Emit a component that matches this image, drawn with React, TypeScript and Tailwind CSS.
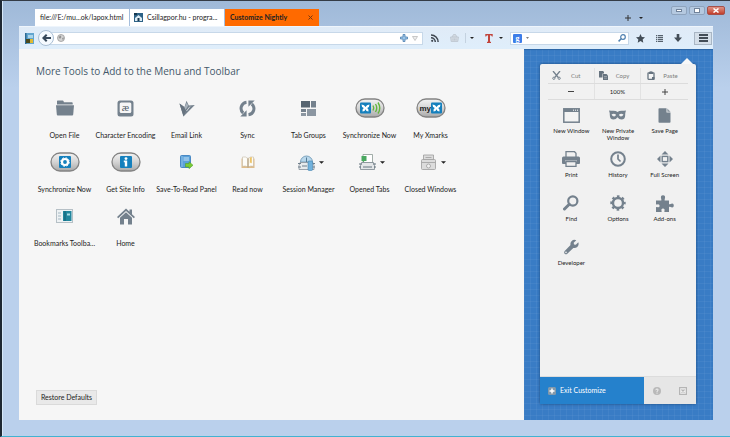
/**
 * Browser window with the customize mode opened:
 * tab strip, navigation toolbar, tool palette and the menu panel.
 */

import type { ReactNode } from 'react';

type IconProps = {
    /** Tailwind classes for the size and colour */
    className?: string;
};

const Caret = ({ className }: IconProps) => (
    <svg viewBox="0 0 6 3" className={className} fill="currentColor">
        <path d="M0 0h6L3 3z" />
    </svg>
);

const FolderIcon = () => (
    <svg viewBox="0 0 18 16" className="w-[18px] h-4" fill="#74818d">
        <path d="M1 1.2q0-.7.7-.7h5q.6 0 .8.6l.4 1.2h8q.8 0 .8.8v1.4H1z" />
        <path d="M0 5.3h18l-.8 9.3q-.1.9-1 .9H1.800q-.9 0-1-.9z" />
    </svg>
);

const EncodingIcon = () => (
    <svg viewBox="0 0 17 17" className="w-[17px] h-[17px]">
        <rect x=".5" y=".5" width="16" height="16" rx="2.500" fill="#74818d" />
        <rect x="2.700" y="2.500" width="11.600" height="10.500" rx="1.500" fill="#f6f6f6" />
        <text x="8.500" y="10.600" textAnchor="middle" fontSize="11" fontFamily="Liberation Serif, serif" fill="#4f5b66">
            æ
        </text>
    </svg>
);

const EmailIcon = () => (
    <svg viewBox="0 0 16 17" className="w-4 h-[17px]">
        <path d="M.5 3.500L5.500 7 7.500.8l2.300 4.700L15.800 5 4.500 16.500z" fill="#74818d" />
        <path d="M.5 3.500L4.500 16.500 7.500 9z" fill="#66737f" />
        <path d="M5.500 7.500L7.800 2.500l1.400 3.300L6.500 10z" fill="#a9b3bc" />
        <path d="M7.500 11l3.500-4.500" stroke="#e4e8eb" strokeWidth=".8" />
    </svg>
);

const SyncIcon = () => (
    <svg viewBox="0 0 17 17" className="w-[17px] h-[17px]">
        <path d="M7.500 2.200A6.200 6.200 0 0 0 4.200 13M9.500 14.800A6.200 6.200 0 0 0 12.800 4" fill="none" stroke="#74818d" strokeWidth="3" />
        <path d="M7.600 10.200v6.300H1.300zM9.400 6.800V.5h6.300z" fill="#74818d" />
    </svg>
);

const TabGroupsIcon = () => (
    <svg viewBox="0 0 15 15" className="w-[15px] h-[15px]">
        <rect width="9" height="6.500" fill="#566470" />
        <rect x="10" width="5" height="6.500" fill="#74818d" />
        <rect y="8" width="5" height="3" fill="#74818d" />
        <rect y="12" width="5" height="3" fill="#8b96a1" />
        <rect x="6" y="8" width="9" height="7" fill="#8b96a1" />
    </svg>
);

/** Rounded metal capsule that holds the Xmarks symbols */
const Capsule = ({ children }: { children: ReactNode }) => (
    <svg viewBox="0 0 30 20" className="w-[30px] h-5">
        <defs>
            <linearGradient id="metal" x1="0" y1="0" x2="0" y2="1">
                <stop offset="0" stopColor="#f4f4f4" />
                <stop offset=".5" stopColor="#d4d4d4" />
                <stop offset="1" stopColor="#a9a9a9" />
            </linearGradient>
        </defs>
        <rect x="1" y="1" width="28" height="18" rx="9" fill="url(#metal)" stroke="#838383" strokeWidth="1.300" />
        {children}
    </svg>
);

const Wings = ({ x }: { x: number }) => (
    <g transform={`translate(${x} 4.500)`}>
        <rect width="11" height="11" rx="1" fill="#1580bd" />
        <path d="M1.500 2q3 0 4 2.500Q6.500 2 9.500 2 9.500 5 7.200 5.500 9 6.500 8.500 9 6 9 5.500 6.800 5 9 2.500 9 2 6.500 3.800 5.500 1.500 5 1.500 2z" fill="#fff" />
    </g>
);

const XmarksSyncIcon = () => (
    <Capsule>
        <Wings x={5} />
        <path d="M18 7.500q1.500 2.500 0 5M20.500 6q2.500 4 0 8M23 4.500q3.500 5.500 0 11" fill="none" stroke="#63b63c" strokeWidth="1.400" />
    </Capsule>
);

const MyXmarksIcon = () => (
    <Capsule>
        <text x="3.500" y="13" fontSize="8" fontWeight="bold" fontFamily="Liberation Sans, sans-serif" fill="#222">
            my
        </text>
        <Wings x={15} />
    </Capsule>
);

const XmarksGearIcon = () => (
    <Capsule>
        <rect x="9" y="4" width="12" height="12" rx="1" fill="#1580bd" />
        <circle cx="15" cy="10" r="3" fill="none" stroke="#fff" strokeWidth="2.200" />
        <circle cx="15" cy="10" r="4.300" fill="none" stroke="#fff" strokeWidth="1" strokeDasharray="1.700 1.700" />
    </Capsule>
);

const XmarksInfoIcon = () => (
    <Capsule>
        <rect x="9" y="4" width="12" height="12" rx="1" fill="#1580bd" />
        <circle cx="15" cy="6.600" r="1.400" fill="#fff" />
        <path d="M12.800 8.600h3.400V14.500h-2.400V10.300h-1z" fill="#fff" />
    </Capsule>
);

const SavePanelIcon = () => (
    <svg viewBox="0 0 13 14" className="w-[13px] h-3.5">
        <rect x=".5" y=".5" width="10" height="12" rx="1" fill="#5ba1da" stroke="#4a89c4" />
        <path d="M3.500 3h5.500M3.500 5h5.500" stroke="#c9e4f7" />
        <path d="M2 1v11" stroke="#8cc0e8" />
        <path d="M5.500 8.500H9V6.700l4 3.500-4 3.500V12H5.500z" fill="#7acb35" stroke="#4a9b1e" strokeWidth=".5" />
    </svg>
);

const BookIcon = () => (
    <svg viewBox="0 0 14 13" className="w-3.5 h-[13px]">
        <path d="M.5 2.500h13v9.500h-13z" fill="#e0bd8a" />
        <path d="M1.500 1q3-.8 5.500 1.500v8.500Q4.500 9.500 1.500 10.300zM12.500 1q-3-.8-5.500 1.500v8.500q2.500-1.500 5.500-.7z" fill="#fdfcf8" stroke="#c5b9a4" strokeWidth=".6" />
        <path d="M8.800 1.500v6l1-1 1 1v-6.500z" fill="#ecc368" />
        <path d="M7 2.500v9" stroke="#a58c62" strokeWidth=".8" />
    </svg>
);

const SessionIcon = () => (
    <svg viewBox="0 0 17 17" className="w-[17px] h-[17px]">
        <path d="M2.500 8a6 6 0 0 1 12 0z" fill="#b9d8ec" stroke="#7aa2bd" />
        <path d="M8.500 8L8.500 3.500" stroke="#557b95" />
        <path d="M2 8.500h13l1 3v4H1v-4z" fill="#e8ebed" stroke="#87919a" strokeWidth=".8" />
        <path d="M0 9.500h3M0 13h3M4 12h5M14.500 9.500H17M14.500 13H17" stroke="#6f7f8b" />
        <rect x="10" y="7" width="4.500" height="9.500" rx="1" fill="#71b2dd" stroke="#4684b0" strokeWidth=".6" />
    </svg>
);

const OpenedTabsIcon = () => (
    <svg viewBox="0 0 17 17" className="w-[17px] h-[17px]">
        <path d="M4 .5h9.500V9H4z" fill="#fff" stroke="#8b9a94" strokeWidth=".8" />
        <path d="M2.500 2h5v5H5.500L4 8.500V7H2.500z" fill="#4aa860" />
        <path d="M2.500 8.500h12l1 3v4h-14v-4z" fill="#e3e6e8" stroke="#7b868e" strokeWidth=".8" />
        <path d="M0 10h3M14 10h3M0 13h2M15 13h2M4 13h9" stroke="#64747f" />
    </svg>
);

const ClosedWindowsIcon = () => (
    <svg viewBox="0 0 17 17" className="w-[17px] h-[17px]" fill="#dcdcdc" stroke="#a5a5a5" strokeWidth=".9">
        <path d="M3.500 1h10v5h-10z" />
        <rect x="1.500" y="5.500" width="14" height="10" rx="1" />
        <path d="M1.500 8.500h14M5.500 3.500h6" />
        <circle cx="8.500" cy="12" r="2" fill="#f2f2f2" />
    </svg>
);

const BookmarksToolbarIcon = () => (
    <svg viewBox="0 0 17 14" className="w-[17px] h-3.5">
        <rect x=".5" y=".5" width="16" height="13" fill="#eef2f4" stroke="#b6c0c6" />
        <path d="M2 4h3M2 7h3M2 10h3" stroke="#a5b8c3" />
        <rect x="7" y="2" width="8.500" height="10" fill="#21869d" />
        <path d="M9 2v10" stroke="#105f74" />
        <path d="M11 4.500h3v2h-3z" fill="#a8dbe4" />
    </svg>
);

const HomeIcon = () => (
    <svg viewBox="0 0 18 17" className="w-[18px] h-[17px]" fill="#74818d">
        <path d="M9 .5L0 9l1.200 1.200L9 3l7.800 7.200L18 9l-3-2.800V1.500h-2.500v2.300z" />
        <path d="M9 4.200l6 5.600V16.500h-4V11H7v5.500H3V9.800z" />
    </svg>
);

const CutIcon = () => (
    <svg viewBox="0 0 9 9" className="w-[9px] h-[9px]" fill="none" stroke="#74818d">
        <path d="M1 0l5.300 6.500M8 0L2.700 6.500" strokeWidth="1.300" />
        <circle cx="1.800" cy="7.300" r="1.100" />
        <circle cx="7.200" cy="7.300" r="1.100" />
    </svg>
);

const CopyIcon = () => (
    <svg viewBox="0 0 9 9" className="w-[9px] h-[9px]" fill="#66737f">
        <path d="M0 0h4l1 1v1.500H3.500V6.500H0z" />
        <path d="M4 3h3.500L9 4.500V9H4z" />
        <path d="M5 5.500h3M5 7.200h3" stroke="#c6ccd1" strokeWidth=".5" />
    </svg>
);

const PasteIcon = () => (
    <svg viewBox="0 0 8 9" className="w-2 h-[9px]">
        <rect x="1" y="1.800" width="6" height="6.500" rx=".5" fill="#f5f5f5" stroke="#66737f" strokeWidth="1.300" />
        <path d="M2 .8h1L4 0l1 .8h1V3H2zM5 6h2.500v2.800H5z" fill="#66737f" />
    </svg>
);

const NewWindowIcon = () => (
    <svg viewBox="0 0 17 15" className="w-[17px] h-[15px]">
        <rect x=".8" y=".8" width="15.400" height="13.400" fill="#f3f3f3" stroke="#74818d" strokeWidth="1.500" />
        <path d="M1 1h15v3H1z" fill="#74818d" />
        <path d="M10 2.200h1M12 2.200h1M14 2.200h1" stroke="#fff" />
    </svg>
);

const MaskIcon = () => (
    <svg viewBox="0 0 17 10" className="w-[17px] h-2.5">
        <path
            fillRule="evenodd"
            fill="#74818d"
            d="M0 .5Q2 .8 4.500.8 7 .8 8.500 2 10 .8 12.500.8 15 .8 17 .5q-.8 2-.8 4.500 0 4.500-3.700 4.500Q10 9.500 8.500 7.200 7 9.500 4.500 9.500.8 9.500.8 5 .8 2.500 0 .5zM2.500 4.500q1 2 2.600 2 1.400 0 2-1.800Q5 2.800 2.500 4.500zm12 0q-2.500-1.700-4.600.2.600 1.800 2 1.800 1.600 0 2.600-2z"
        />
    </svg>
);

const SavePageIcon = () => (
    <svg viewBox="0 0 13 15" className="w-[13px] h-[15px]">
        <path d="M.5 1q0-.8.8-.8H8.500v4.300h4V14q0 .8-.8.8H1.300q-.8 0-.8-.8z" fill="#74818d" />
        <path d="M9.300.5l3.200 3.300H9.300z" fill="#8e99a3" />
    </svg>
);

const PrintIcon = () => (
    <svg viewBox="0 0 18 16" className="w-[18px] h-4">
        <path d="M4 6V.7h8.500L14 2.200V6" fill="#f1f1f1" stroke="#74818d" strokeWidth="1.300" />
        <path d="M1.500 5.500h15q1.500 0 1.500 1.500v5q0 1-1 1H1q-1 0-1-1V7q0-1.500 1.500-1.500z" fill="#74818d" />
        <path d="M3 9.500h12v1H3z" fill="#f1f1f1" />
        <path d="M4 10.500h10v4.800H4z" fill="#f1f1f1" stroke="#74818d" strokeWidth="1.300" />
    </svg>
);

const HistoryIcon = () => (
    <svg viewBox="0 0 16 16" className="w-4 h-4" fill="none" stroke="#74818d">
        <circle cx="8" cy="8" r="6.800" strokeWidth="2" />
        <path d="M8 3.500V8l2.500 2.500" strokeWidth="1.700" />
    </svg>
);

const FullScreenIcon = () => (
    <svg viewBox="0 0 16 16" className="w-4 h-4" fill="#74818d">
        <path d="M8 0l3.500 3.500h-7zM8 16l3.500-3.500h-7zM0 8l3.500-3.500v7zM16 8l-3.500-3.500v7z" />
        <rect x="5.200" y="5.400" width="5.600" height="5.200" fill="none" stroke="#74818d" strokeWidth="1.400" />
    </svg>
);

const FindIcon = () => (
    <svg viewBox="0 0 16 16" className="w-4 h-4" fill="none" stroke="#74818d">
        <circle cx="9.800" cy="6" r="4.600" strokeWidth="2.200" />
        <path d="M6.300 9.300L1.500 14" strokeWidth="3" strokeLinecap="round" />
    </svg>
);

const OptionsIcon = () => (
    <svg viewBox="0 0 16 16" className="w-4 h-4" fill="none" stroke="#74818d">
        <circle cx="8" cy="8" r="5" strokeWidth="2.400" />
        <circle cx="8" cy="8" r="6.700" strokeWidth="2" strokeDasharray="2.630 2.630" strokeDashoffset="1.300" />
    </svg>
);

const AddonsIcon = () => (
    <svg viewBox="0 0 18 17" className="w-[18px] h-[17px]" fill="#74818d">
        <path d="M0 5.500h5q.8 0 .3-1Q4 .3 7 .3T8.700 4.500q-.5 1 .3 1H13v3.200q0 1 1 .5 3.800-1.800 3.800 1.300T14 11.800q-1-.5-1 .5V17H8.800q-.8 0-.4-1 .8-2.500-1.400-2.500T5.600 16q.4 1-.4 1H0v-4.500q0-.8 1-.4 2.600.8 2.600-1.300T1 9.400q-1 .4-1-.4z" />
    </svg>
);

const DeveloperIcon = () => (
    <svg viewBox="0 0 16 16" className="w-4 h-4">
        <path
            fill="#74818d"
            d="M13.300 1.200L10.700 3.700l.3 1.800 1.800.3L15.300 3.200q1 3-1 4.800-1.700 1.400-4 .9L4.300 14.700q-1.300 1.100-2.600 0-1.100-1.300 0-2.600L7.500 6.100Q7 3.800 8.500 2.200 10.500.2 13.300 1.200z"
        />
        <circle cx="3" cy="13.400" r=".8" fill="#f1f1f1" />
    </svg>
);

type Tool = {
    label: string;
    icon: ReactNode;
    /** Shows a caret next to the icon */
    dropdown?: boolean;
};

const paletteTools: Tool[] = [
    { label: 'Open File', icon: <FolderIcon /> },
    { label: 'Character Encoding', icon: <EncodingIcon /> },
    { label: 'Email Link', icon: <EmailIcon /> },
    { label: 'Sync', icon: <SyncIcon /> },
    { label: 'Tab Groups', icon: <TabGroupsIcon /> },
    { label: 'Synchronize Now', icon: <XmarksSyncIcon /> },
    { label: 'My Xmarks', icon: <MyXmarksIcon /> },
    { label: 'Synchronize Now', icon: <XmarksGearIcon /> },
    { label: 'Get Site Info', icon: <XmarksInfoIcon /> },
    { label: 'Save-To-Read Panel', icon: <SavePanelIcon /> },
    { label: 'Read now', icon: <BookIcon /> },
    { label: 'Session Manager', icon: <SessionIcon />, dropdown: true },
    { label: 'Opened Tabs', icon: <OpenedTabsIcon />, dropdown: true },
    { label: 'Closed Windows', icon: <ClosedWindowsIcon />, dropdown: true },
    { label: 'Bookmarks Toolba...', icon: <BookmarksToolbarIcon /> },
    { label: 'Home', icon: <HomeIcon /> },
];

const panelTools: Tool[] = [
    { label: 'New Window', icon: <NewWindowIcon /> },
    { label: 'New Private Window', icon: <MaskIcon /> },
    { label: 'Save Page', icon: <SavePageIcon /> },
    { label: 'Print', icon: <PrintIcon /> },
    { label: 'History', icon: <HistoryIcon /> },
    { label: 'Full Screen', icon: <FullScreenIcon /> },
    { label: 'Find', icon: <FindIcon /> },
    { label: 'Options', icon: <OptionsIcon /> },
    { label: 'Add-ons', icon: <AddonsIcon /> },
    { label: 'Developer', icon: <DeveloperIcon /> },
];

/**
 * Tab strip with the window controls on the right.
 */
function TabStrip() {
    return (
        <header className="flex h-[25px] items-end pr-[5px] pl-8">
            <div className="flex h-[17px] gap-px text-[7px] text-[#222]">
                <button className="w-[94px] bg-white px-[5px] text-left whitespace-nowrap">file:///E:/mu...ok/lapox.html</button>
                <button className="flex w-[94px] items-center gap-1 bg-white px-1 whitespace-nowrap">
                    <svg viewBox="0 0 9 9" className="h-[9px] w-[9px] shrink-0">
                        <rect width="9" height="9" fill="#2d6286" />
                        <path d="M1 5l3.500-3L8 5v3H1z" fill="#dcebf4" />
                        <path d="M3.500 5h2v3h-2zM0 0h3v2H0z" fill="#17384f" />
                    </svg>
                    Csillagpor.hu - progra...
                </button>
                <div className="flex w-[94px] items-center justify-between bg-[#ff6a00] pr-1.5 pl-[5px]">
                    <button className="font-bold whitespace-nowrap">Customize Nightly</button>
                    <button aria-label="Close tab">
                        <svg viewBox="0 0 5 5" className="h-[5px] w-[5px]" stroke="#7a3a10">
                            <path d="M.5.5l4 4M4.500.5l-4 4" />
                        </svg>
                    </button>
                </div>
            </div>
            <div className="ml-auto flex h-4 items-center gap-2 pr-7">
                <button aria-label="New tab">
                    <svg viewBox="0 0 6 6" className="h-1.5 w-1.5" stroke="#333">
                        <path d="M3 0v6M0 3h6" />
                    </svg>
                </button>
                <button aria-label="List all tabs">
                    <Caret className="h-0.5 w-1 text-[#222]" />
                </button>
            </div>
            <div className="mt-[5px] flex gap-0.5 self-start">
                <button aria-label="Minimize" className="flex h-[9px] w-4 items-center justify-center rounded-xs border border-[#8ea3bd] bg-[#b5c9e0]">
                    <span className="h-[3px] w-1.5 border border-[#71839b] bg-white" />
                </button>
                <button aria-label="Maximize" className="flex h-[9px] w-4 items-center justify-center rounded-xs border border-[#8ea3bd] bg-[#b5c9e0]">
                    <span className="h-[5px] w-1.5 border border-[#71839b] bg-white" />
                </button>
                <button aria-label="Close" className="flex h-[9px] w-[18px] items-center justify-center rounded-xs border border-[#a5504a] bg-linear-to-b from-[#dd9185] to-[#c23d2a]">
                    <svg viewBox="0 0 6 5" className="h-[5px] w-1.5" stroke="#fff" strokeWidth="1.500">
                        <path d="M.5.5l5 4M5.500.5l-5 4" />
                    </svg>
                </button>
            </div>
        </header>
    );
}

/**
 * Navigation toolbar with the address and search fields.
 */
function Toolbar() {
    return (
        <nav className="flex h-[23px] items-center border-t border-[#eef5fc] bg-linear-to-b from-[#e0ebf7] to-[#dfeefb] pr-px pl-1.5">
            <button aria-label="Bookmarks" className="mr-1">
                <svg viewBox="0 0 9 11" className="h-[11px] w-[9px]">
                    <rect width="9" height="11" fill="#62a5cf" />
                    <path d="M0 0h1.500v11H0z" fill="#2d6a92" />
                    <path d="M3 2h5v3H3z" fill="#a9d4ea" />
                    <path d="M1 6h5v4H1z" fill="#4c4a1d" />
                    <path d="M5 6h3v4H5z" fill="#e0ba32" />
                </svg>
            </button>
            <button aria-label="Back" className="z-10 -mr-2 flex h-4 w-4 shrink-0 items-center justify-center rounded-full border border-[#a9bed4] bg-[#f5faff]">
                <svg viewBox="0 0 9 8" className="h-2 w-[9px]" fill="none" stroke="#36485a" strokeWidth="2">
                    <path d="M9 4H2M4.700.7L1.400 4l3.300 3.300" />
                </svg>
            </button>
            <div className="flex h-[13px] flex-1 items-center gap-1 border border-[#c7d8e9] bg-white pr-1 pl-2.5">
                <svg viewBox="0 0 8 8" className="h-2 w-2">
                    <circle cx="4" cy="4" r="3.500" fill="#d5d5d5" stroke="#9a9a9a" strokeWidth=".8" />
                    <path d="M1.500 3l2-1.500L4.500 3 3 5zM5 4l2-.5-1 3z" fill="#929292" />
                </svg>
                <input aria-label="Address" className="h-full min-w-0 flex-1 text-[7px] outline-none" />
                <svg viewBox="0 0 8 8" className="h-2 w-2" fill="#9cc5e8" stroke="#4f80b0" strokeWidth=".8">
                    <path d="M3 .5h2V3h2.500v2H5v2.500H3V5H.5V3H3z" />
                </svg>
                <svg viewBox="0 0 6 5" className="h-[5px] w-1.5" fill="#eee" stroke="#bbb" strokeWidth=".8">
                    <path d="M.5.5h5L3 4.500z" />
                </svg>
            </div>
            <div className="flex w-[87px] items-center justify-between pr-[7px] pl-2">
                <button aria-label="Subscribe">
                    <svg viewBox="0 0 8 8" className="h-2 w-2" fill="none" stroke="#3f4750" strokeWidth="1.500">
                        <path d="M0 .9a7 7 0 0 1 7.100 7.100M0 3.700A4.300 4.300 0 0 1 4.300 8" />
                        <circle cx="1.200" cy="6.800" r="1.100" fill="#3f4750" stroke="none" />
                    </svg>
                </button>
                <button aria-label="Basket" className="ml-1">
                    <svg viewBox="0 0 9 8" className="h-2 w-[9px]" fill="#d3dae2" stroke="#b7c0ca" strokeWidth=".7">
                        <path d="M.5 3h8l-.7 4.500H1.200zM2 3l1.500-2.500h2L7 3" />
                        <path d="M3 4.500v2M4.500 4.500v2M6 4.500v2" />
                    </svg>
                </button>
                <button aria-label="Basket options" className="flex h-2.5 items-center border-l border-[#c4d2e0] pl-1">
                    <Caret className="h-0.5 w-1 text-[#222]" />
                </button>
                <button aria-label="Text tools" className="ml-1">
                    <svg viewBox="0 0 8 9" className="h-[9px] w-2" fill="#c1443b">
                        <path d="M.3 0h7.400v2.600h-.8Q6.600 1.200 5 1.200v6q0 .8 1 .8v1H2V8q1 0 1-.8v-6q-1.600 0-1.900 1.400H.3z" />
                    </svg>
                </button>
                <button aria-label="Text tool options">
                    <Caret className="h-0.5 w-1 text-[#222]" />
                </button>
            </div>
            <div className="flex h-[13px] w-[119px] items-center gap-1 border border-[#c7d8e9] bg-white px-0.5">
                <svg viewBox="0 0 9 9" className="h-[9px] w-[9px]">
                    <rect width="9" height="9" rx="1" fill="#3d7de8" />
                    <text x="4.500" y="6.500" textAnchor="middle" fontSize="8" fontWeight="bold" fontFamily="Liberation Serif, serif" fill="#fff">
                        g
                    </text>
                </svg>
                <Caret className="h-0.5 w-[3px] text-[#555]" />
                <input aria-label="Search" className="h-full min-w-0 flex-1 text-[7px] outline-none" />
                <svg viewBox="0 0 8 8" className="h-2 w-2" fill="none" stroke="#4f80b0">
                    <circle cx="5" cy="3" r="2.300" strokeWidth="1.200" />
                    <path d="M3.200 4.800L.6 7.400" strokeWidth="1.500" />
                </svg>
            </div>
            <div className="flex w-[65px] items-center justify-between pr-3 pl-[7px]">
                <button aria-label="Bookmark this page">
                    <svg viewBox="0 0 10 10" className="h-[9px] w-[9px]" fill="#434d57">
                        <path d="M5 0l1.500 3.300 3.500.4-2.600 2.400.7 3.600L5 7.900 1.900 9.700l.7-3.600L0 3.700l3.500-.4z" />
                    </svg>
                </button>
                <button aria-label="Show bookmarks">
                    <svg viewBox="0 0 7 7" className="h-[7px] w-[7px]" stroke="#56616c" strokeWidth="1.200">
                        <path d="M0 .7h1.300M2 .7h5M0 2.600h1.300M2 2.600h5M0 4.500h1.300M2 4.500h5M0 6.400h1.300M2 6.400h5" />
                    </svg>
                </button>
                <button aria-label="Downloads">
                    <svg viewBox="0 0 8 8" className="h-2 w-2" fill="#434d57">
                        <path d="M2.700 0h2.600v3.500H8L4 8 0 3.500h2.700z" />
                    </svg>
                </button>
            </div>
            <button aria-label="Menu" className="flex h-[13px] w-[18px] flex-col items-center justify-center gap-px border border-[#a9b6c4] bg-[#d5dfe9]">
                <span className="h-0.5 w-[9px] bg-[#434d57]" />
                <span className="h-0.5 w-[9px] bg-[#434d57]" />
                <span className="h-0.5 w-[9px] bg-[#434d57]" />
            </button>
        </nav>
    );
}

/**
 * Palette with the tools that can be moved to the menu or the toolbar.
 */
function Palette() {
    return (
        <section className="flex flex-1 flex-col items-start bg-[#f6f6f6] px-[15px] pt-4 pb-[15px]">
            <h1 className="ml-0.5 font-['Open_Sans','Noto_Sans',sans-serif] text-[10px] leading-3 text-[#44586b]">More Tools to Add to the Menu and Toolbar</h1>
            <div className="mt-4 grid grid-cols-[repeat(7,61px)] text-[7px] leading-2 text-[#222]">
                {paletteTools.map(({ label, icon, dropdown }, index) => (
                    <button key={index} className="flex h-[54px] flex-col items-center whitespace-nowrap">
                        <span className="flex h-[30px] items-center gap-1">
                            {icon}
                            {dropdown && <Caret className="-mr-1 h-[3px] w-[5px] text-[#222]" />}
                        </span>
                        <span className="mt-2">{label}</span>
                    </button>
                ))}
            </div>
            <button className="mt-auto ml-0.5 h-[15px] w-[61px] border border-[#dadada] bg-[#e9e9e9] text-[7px] text-[#222]">Restore Defaults</button>
        </section>
    );
}

/**
 * Menu panel on the blueprint background.
 */
function MenuPanel() {
    return (
        <aside className="flex w-[189px] bg-[#397cc5] bg-[linear-gradient(#ffffff0b_1px,transparent_1px),linear-gradient(90deg,#ffffff0b_1px,transparent_1px)] bg-size-[6px_6px] pt-[15px] pr-[17px] pb-4 pl-4 shadow-[inset_0_1px_1px_#2c64a4]">
            <div className="relative flex flex-1 flex-col rounded-xs bg-[#f1f1f1] text-[6px] leading-[7px] text-[#222] shadow-[0_0_3px_#1d4879]">
                <svg viewBox="0 0 12 6" className="absolute -top-1.5 right-[3px] h-1.5 w-3" fill="#f8f8f8">
                    <path d="M0 6l6-6 6 6z" />
                </svg>
                <div className="mx-2 mt-1 grid grid-cols-3 divide-x divide-[#e2e2e2] border-b border-[#dcdcdc] text-[#7d7d7d]">
                    <button className="flex h-[15px] items-center gap-2.5 pl-1">
                        <CutIcon /> Cut
                    </button>
                    <button className="flex h-[15px] items-center gap-2 pl-1">
                        <CopyIcon /> Copy
                    </button>
                    <button className="flex h-[15px] items-center gap-2 pl-1.5">
                        <PasteIcon /> Paste
                    </button>
                </div>
                <div className="mx-2 grid grid-cols-3 divide-x divide-[#e2e2e2] border-b border-[#dcdcdc]">
                    <button aria-label="Zoom out" className="flex h-[15px] items-center justify-center">
                        <span className="h-px w-1.5 bg-[#444]" />
                    </button>
                    <button className="h-[15px]">100%</button>
                    <button aria-label="Zoom in" className="flex h-[15px] items-center justify-center">
                        <svg viewBox="0 0 6 6" className="h-1.5 w-1.5" stroke="#444">
                            <path d="M3 0v6M0 3h6" />
                        </svg>
                    </button>
                </div>
                <div className="mx-2 mt-[5px] grid grid-cols-3">
                    {panelTools.map(({ label, icon }) => (
                        <button key={label} className="flex h-11 flex-col items-center px-1">
                            <span className="flex h-5 items-center">{icon}</span>
                            <span className="mt-0.5">{label}</span>
                        </button>
                    ))}
                </div>
                <footer className="mt-auto flex h-7 border-t border-[#dcdcdc] bg-[#e6e6e6]">
                    <button className="flex flex-1 items-center gap-1 bg-[#2581cc] pl-2 text-[7px] text-white">
                        <svg viewBox="0 0 8 8" className="h-2 w-2">
                            <rect width="8" height="8" rx="1.500" fill="#8399ab" />
                            <path d="M4 1.500v5M1.500 4h5" stroke="#fff" strokeWidth="1.500" />
                        </svg>
                        Exit Customize
                    </button>
                    <button aria-label="Help" className="flex w-[26px] items-center justify-center">
                        <svg viewBox="0 0 8 8" className="h-2 w-2">
                            <circle cx="4" cy="4" r="4" fill="#b9b9b9" />
                            <path d="M2.800 3.200q0-1.200 1.200-1.200t1.200 1Q5.200 3.700 4 4.300V5M4 5.600v1" stroke="#f4f4f4" fill="none" />
                        </svg>
                    </button>
                    <button aria-label="Quit" className="flex w-[26px] items-center justify-center">
                        <svg viewBox="0 0 8 8" className="h-2 w-2">
                            <rect x=".6" y=".6" width="6.800" height="6.800" fill="#eee" stroke="#b5b5b5" strokeWidth="1.200" />
                            <path d="M2.500 2.500l3 3M5.500 2.500l-3 3" stroke="#b5b5b5" strokeWidth="1.200" />
                        </svg>
                    </button>
                </footer>
            </div>
        </aside>
    );
}

export default function App() {
    return (
        <div className="flex min-h-screen flex-col border-t border-b border-l-2 border-t-[#343b45] border-b-[#42b3d1] border-l-[#1e2833] bg-[#bad0ec] bg-linear-to-b from-[#9fb9d8] to-[#bad0ec] to-20% font-[Lato,'Open_Sans',sans-serif]">
            <div className="flex flex-1 flex-col border-l border-[#d6e8f8] pb-4">
                <TabStrip />
                <div className="mr-[17px] ml-4 flex flex-1 flex-col">
                    <Toolbar />
                    <main className="flex flex-1">
                        <Palette />
                        <MenuPanel />
                    </main>
                </div>
            </div>
        </div>
    );
}
